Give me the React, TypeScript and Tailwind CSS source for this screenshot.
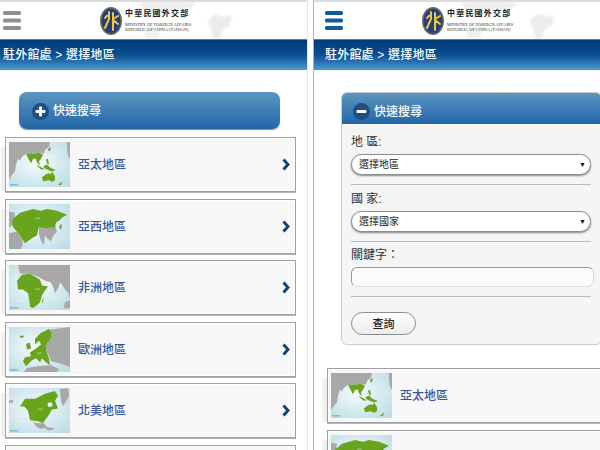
import * as React from 'react';

type MapKind = 'asia' | 'west' | 'africa' | 'europe' | 'america';

// rough continents for the region thumbnails, 61x46 box
const mapShapes: Record<MapKind, { gray: string[]; green: string[]; labels: number[][] }> = {
  asia: {
    gray: [
      'M0 0H41L40 5L36 8L35 12L30 11L24 12L17 12L13 15L11 19L9 17L7 23L6 30L2 35L0 38Z',
      'M58 0H61V17L59 14L58 7Z',
    ],
    green: [
      'M17 12L24 12L30 11L34 13L32 17L30 20L31 24L28 21L27 17L24 17L22 22L19 16Z',
      'M27 23L31 25L36 28L32 28Z',
      'M34 25L38 23L41 26L47 29L42 30L36 27Z',
      'M37 18L39 17L40 23L38 22Z',
      'M39 8L41 5L42 7L40 10Z',
      'M33 36L37 33L40 32L42 33L43 30L46 35L46 39L43 41L40 39L34 40Z',
      'M49 44L53 40L52 44Z',
    ],
    labels: [[42, 14], [57, 21], [20, 29]],
  },
  west: {
    gray: [
      'M0 8L6 9L5 16L3 22L0 24Z',
      'M0 30L8 28L11 32L14 40L12 46H0Z',
      'M30 23L39 25L46 22L48 28L44 33L42 38L38 35L36 32L35 42L32 38L30 31Z',
    ],
    green: [
      'M4 15L11 9L18 7L24 5L32 7L38 5L48 7L58 11L53 14L50 17L47 19L46 24L42 24L38 25L33 24L30 23L28 32L23 35L16 40L13 36L11 32L8 28L5 25L3 21Z',
      'M50 23L53 20L52 27Z',
    ],
    labels: [[26, 14], [52, 33]],
  },
  africa: {
    gray: [
      'M9 0H61V34L59 28L56 25L53 20L51 18L49 24L46 29L44 22L42 18L36 16L29 12L21 9L11 9Z',
      'M56 38L61 36V44H55Z',
    ],
    green: [
      'M8 16L13 10L21 9L28 13L31 15L33 21L39 22L36 26L33 31L31 38L27 42L24 44L21 43L20 34L19 29L14 25L9 25Z',
      'M33 36L35 33L33 40Z',
    ],
    labels: [[26, 24], [8, 36], [43, 33]],
  },
  europe: {
    gray: ['M38 3L61 0V41L50 37L42 35L40 30L37 24L38 16L43 8Z', 'M15 46L18 42L28 40L42 39L50 43L48 46Z'],
    green: [
      'M26 12L32 6L40 2L43 7L41 13L38 16L37 24L40 32L41 39L37 36L33 32L31 36L27 32L23 34L17 40L14 35L16 31L22 30L21 26L27 22L32 18L30 14L26 18Z',
      'M11 9L15 9L14 11L11 11Z',
      'M17 17L21 16L22 22L18 23Z',
    ],
    labels: [[28, 26], [10, 32]],
  },
  america: {
    gray: [
      'M51 1L59 0L60 8L57 14L54 19L52 13Z',
      'M0 13L4 12L4 15L0 15Z',
      'M24 35L30 36L35 36L38 40L46 41L41 44L35 41L31 42L27 39Z',
    ],
    green: [
      'M11 19L16 11L26 11L32 8L36 6L46 3L49 8L46 13L49 21L43 22L39 29L36 33L34 36L29 34L21 33L19 23L15 19Z',
    ],
    labels: [[29, 21], [8, 33]],
  },
};

function RegionMap({ kind }: { kind: MapKind }) {
  const id = `sea-${kind}`;
  const shapes = mapShapes[kind];
  return (
    <div className="h-[45px] w-[61px] shrink-0 overflow-hidden">
      <svg viewBox="0 0 61 46" preserveAspectRatio="none" className="block h-[45px] w-[61px] blur-[0.5px]">
        <defs>
          <radialGradient id={id} cx="0.45" cy="0.45" r="0.8">
            <stop offset="0" stopColor="#f8fcfd" />
            <stop offset="1" stopColor="#b0d6e2" />
          </radialGradient>
        </defs>
        <rect x="-2" y="-2" width="65" height="50" fill={`url(#${id})`} />
        {shapes.gray.map((d) => (
          <path key={d} d={d} fill="#a8a8a8" />
        ))}
        {shapes.green.map((d) => (
          <path key={d} d={d} fill="#68a51c" />
        ))}
        {kind === 'america' && <circle cx="41" cy="17" r="2.5" fill="#e6f2f6" />}
        {shapes.labels.map(([x, y]) => (
          <rect key={`${x}-${y}`} x={x} y={y} width="5" height="1.2" fill="#ffffff" opacity="0.4" />
        ))}
        <rect x="1" y="43" width="8" height="1.5" fill="#7fb8d6" />
      </svg>
    </div>
  );
}

function RegionRow({ kind, name }: { kind: MapKind; name: string }) {
  return (
    <div className="relative h-[55px] w-[291px] shrink-0 border border-[#9f9f9f] bg-[#f7f7f7] shadow-[inset_0_0_0_1px_#ffffff,0_1px_0_#b5b5b5]">
      {/* faded paper edge sticking out on the left */}
      <span className="absolute top-[9px] -left-[5px] h-[44px] w-[4px] bg-[#f0f0f0]" />
      <div className="flex h-full items-center pr-[5px] pl-[3px]">
        <RegionMap kind={kind} />
        <span className="ml-2 flex-1 pt-px text-[12px] font-medium text-[#3a559b]">{name}</span>
        <svg viewBox="0 0 8 13" className="h-[13px] w-[8px]">
          <path d="M1.5 1.5L6 6.5L1.5 11.5" stroke="#0f4079" strokeWidth="2.8" fill="none" />
        </svg>
      </div>
    </div>
  );
}

function MenuIcon({ color }: { color: string }) {
  return (
    <svg viewBox="0 0 18 19" className="h-[19px] w-[18px]">
      <rect y="0" width="18" height="4" rx="1.5" fill={color} />
      <rect y="7.5" width="18" height="4" rx="1.5" fill={color} />
      <rect y="15" width="18" height="4" rx="1.5" fill={color} />
    </svg>
  );
}

function Logo() {
  return (
    <div className="relative flex h-[37px] w-[175px] items-center overflow-hidden pl-[16px]">
      <svg viewBox="0 0 175 37" className="absolute inset-0 h-[37px] w-[175px] blur-[1px]">
        <path d="M56 0H112L108 5L96 9L88 7L80 11L72 9L66 14L60 9Z" fill="#eeeeee" />
        <path d="M60 28L70 25L76 31L74 37H62Z" fill="#f0f0f0" />
        <path d="M124 18L132 12L140 15L148 13L146 24L138 28L136 37H129L127 26Z" fill="#ececec" />
      </svg>
      <svg viewBox="0 0 22 28" className="relative h-[28px] w-[22px] shrink-0">
        <ellipse cx="11" cy="14" rx="11" ry="14" fill="#6c6a5c" />
        <ellipse cx="11" cy="14" rx="9.4" ry="12.2" fill="#233f80" />
        <path
          d="M5 11C7 8 8 8 9 8M9 5L9 12L5 21M13 6V23M13 12L18 9M13 13L18 17"
          stroke="#f0c83c"
          strokeWidth="2"
          fill="none"
          strokeLinecap="round"
        />
      </svg>
      <div className="relative ml-[3px] leading-none">
        <div className="font-['Liberation_Serif','Noto_Sans_CJK_TC',serif] text-[8px] font-bold tracking-[1.2px] text-[#222222]">
          中華民國外交部
        </div>
        <div className="mt-[4px] font-['Liberation_Serif',serif] text-[4.4px] leading-[5px] whitespace-nowrap text-[#333333]">
          MINISTRY OF FOREIGN AFFAIRS
          <br />
          REPUBLIC OF CHINA (TAIWAN)
        </div>
      </div>
    </div>
  );
}

function PageTop({ menuColor, inset }: { menuColor: string; inset?: boolean }) {
  return (
    <>
      <div className="h-[2px] bg-[#dddddd]" />
      <div className={`flex h-[37px] items-center bg-white ${inset ? 'pl-[11px]' : 'pl-[3px]'}`}>
        <MenuIcon color={menuColor} />
        <div className="ml-[63px]">
          <Logo />
        </div>
      </div>
      <div className="h-[1px] bg-[#777777]" />
      <div
        className={`flex h-[30px] items-center bg-gradient-to-b from-[#033a78] via-[#0b4f91] to-[#4a9ad2] text-[12px] font-medium tracking-[0.2px] text-white ${
          inset ? 'pl-[11px]' : 'pl-[3px]'
        }`}
      >
        駐外館處 &gt; 選擇地區
      </div>
    </>
  );
}

function SearchIcon({ minus }: { minus?: boolean }) {
  return (
    <svg viewBox="0 0 17 17" className="h-[17px] w-[17px] shrink-0">
      <circle cx="8.5" cy="8.5" r="8.5" fill="#1f4f82" />
      <rect x="3.5" y="7" width="10" height="3" rx="1" fill="#ffffff" />
      {!minus && <rect x="7" y="3.5" width="3" height="10" rx="1" fill="#ffffff" />}
    </svg>
  );
}

function Field({ label, value }: { label: string; value: string }) {
  return (
    <div className="border-b border-[#bcbcbc] pb-[9px]">
      <div className="mb-[3px] h-[17px] text-[12px] leading-[17px] text-[#333333]">{label}</div>
      <div className="relative w-[240px]">
        <select
          defaultValue={value}
          className="block h-[21px] w-full appearance-none rounded-full border border-[#8c8c8c] bg-white pl-[7px] text-[10px] text-[#222222] shadow-[0_1px_2px_#888888]"
        >
          <option>{value}</option>
        </select>
        <span className="pointer-events-none absolute top-[6px] right-[5px] text-[7px] leading-[9px] text-[#111111]">▼</span>
      </div>
    </div>
  );
}

const regions: { kind: MapKind; name: string }[] = [
  { kind: 'asia', name: '亞太地區' },
  { kind: 'west', name: '亞西地區' },
  { kind: 'africa', name: '非洲地區' },
  { kind: 'europe', name: '歐洲地區' },
  { kind: 'america', name: '北美地區' },
];

function LeftPage() {
  return (
    <div className="h-[450px] w-[308px] shrink-0 overflow-hidden border-r border-[#e6e6e6]">
      <PageTop menuColor="#8f8f8f" />
      <div className="pt-[22px] pl-[19px]">
        <div className="flex h-[37px] w-[261px] items-center rounded-[8px] bg-gradient-to-b from-[#5c96c0] to-[#2165a8] pt-px pl-[13px] text-[12px] font-medium text-white shadow-[0_1px_1px_#888888]">
          <SearchIcon />
          <span className="ml-1">快速搜尋</span>
        </div>
      </div>
      <div className="flex flex-col gap-[6.5px] pt-[8px] pl-[5px]">
        {regions.map((r) => (
          <RegionRow key={r.kind} kind={r.kind} name={r.name} />
        ))}
        <RegionRow kind="asia" name="" />
      </div>
    </div>
  );
}

function RightPage() {
  return (
    <div className="ml-[5px] h-[450px] w-[287px] shrink-0 overflow-hidden border-l border-[#94bde8]">
      <PageTop menuColor="#0f5a99" inset />
      <div className="w-[320px] pl-[8px]">
        <div className="pt-[22px] pl-[19px]">
          <div className="w-[261px] overflow-hidden rounded-[6px] border border-[#cccccc] bg-[#f5f5f5]">
            <div className="flex h-[31px] items-center bg-gradient-to-b from-[#5c96c0] to-[#2165a8] pt-[6px] pl-[11px] text-[12px] font-medium text-white">
              <SearchIcon minus />
              <span className="ml-1">快速搜尋</span>
            </div>
            <div className="pt-[10px] pl-[9px]">
              <div className="flex w-[240px] flex-col gap-[6px]">
                <Field label="地 區:" value="選擇地區" />
                <Field label="國 家:" value="選擇國家" />
              </div>
              <div className="w-[240px] border-b border-[#bcbcbc] pt-[5px] pb-[9px]">
                <div className="mb-[3px] h-[17px] text-[12px] leading-[17px] text-[#333333]">關鍵字：</div>
                <input className="block h-[20px] w-[243px] rounded-[6px] border border-[#9a9a9a] border-r-[#dddddd] border-b-[#dddddd] bg-[#fbfbfb]" />
              </div>
              <button className="mt-[15px] mb-[9px] block h-[23px] w-[65px] rounded-full border border-[#8c8c8c] bg-gradient-to-b from-white to-[#ececec] pt-[2px] text-[11px] font-medium text-[#222222]">
                查詢
              </button>
            </div>
          </div>
        </div>
        <div className="flex flex-col gap-[6.5px] pt-[23px] pl-[5px]">
          <RegionRow kind="asia" name="亞太地區" />
          <RegionRow kind="west" name="" />
        </div>
      </div>
    </div>
  );
}

export default function App() {
  return (
    <div className="flex h-[450px] w-[600px] overflow-hidden bg-white font-['Liberation_Sans','Noto_Sans_CJK_TC',sans-serif]">
      <LeftPage />
      <RightPage />
    </div>
  );
}
